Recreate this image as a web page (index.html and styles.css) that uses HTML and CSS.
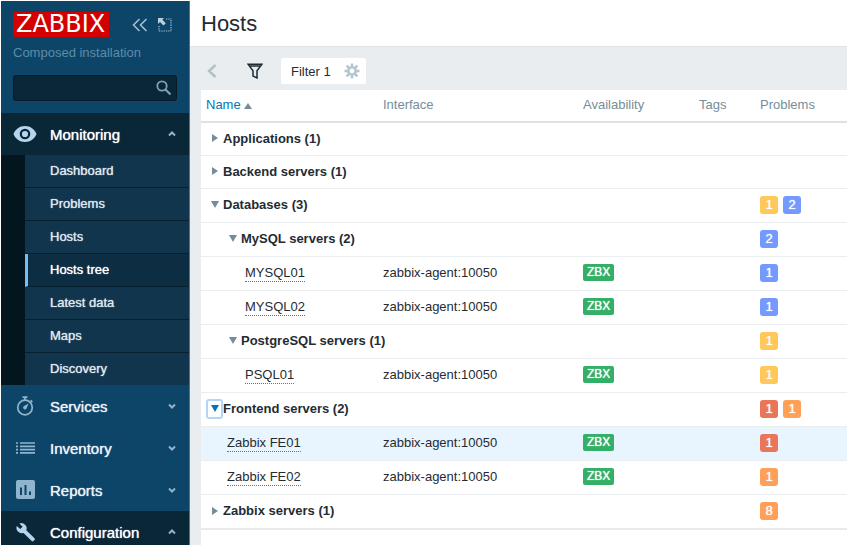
FILE: index.html
```html
<!DOCTYPE html>
<html lang="en">

	<head>
		<meta charset="utf-8" />
		<title>Hosts</title>
		<link rel="stylesheet" href="styles.css">
	</head>

	<body>
		<aside class="sidebar">
			<div class="sidebar_header">
				<a class="logo" href="#">ZABBIX</a>
				<button class="icon_btn" type="button" aria-label="Collapse sidebar">
					<svg width="16" height="14" viewBox="0 0 16 14"><path d="M7.500 1L1.500 7l6 6M14.500 1l-6 6 6 6" fill="none" stroke="#a3bfd1" stroke-width="1.600" /></svg>
				</button>
				<button class="icon_btn" type="button" aria-label="Hide sidebar">
					<svg width="14" height="14" viewBox="0 0 14 14"><path d="M0 0h6L4.300 1.700l3.500 3.500-2.300 2.300L2 4 0 6z" fill="#b9d0df" /><path d="M8 1h5.500M13 2v11M1 8v5M1 13h12" fill="none" stroke="#a3bfd1" stroke-width="1.200" stroke-dasharray="1.300 1" /></svg>
				</button>
			</div>
			<div class="server_name">Composed installation</div>
			<form class="search">
				<input type="text" aria-label="Search">
				<button type="button" aria-label="Search">
					<svg width="16" height="16" viewBox="0 0 16 16"><circle cx="6" cy="6" r="4.700" fill="none" stroke="#7ea1b8" stroke-width="1.800" /><path d="M9.500 9.500l5 5" stroke="#7ea1b8" stroke-width="2.200" /></svg>
				</button>
			</form>
			<ul class="menu">
				<li class="menu_open">
					<a class="menu_link" href="#">
						<svg class="menu_icon" width="24" height="18" viewBox="0 0 24 18"><path fill-rule="evenodd" d="M12 1C6.500 1 2.300 4.300.5 9c1.800 4.700 6 8 11.500 8s9.700-3.300 11.500-8C21.700 4.300 17.500 1 12 1zm0 13.300a5.300 5.300 0 1 1 0-10.600 5.300 5.300 0 0 1 0 10.600zM12 5.900a3.100 3.100 0 1 0 0 6.200 3.100 3.100 0 0 0 0-6.200z" fill="#b5d5ee" /></svg>
						<span>Monitoring</span>
						<svg class="chevron" width="8" height="6" viewBox="0 0 8 6"><path d="M1 4.500l3-3 3 3" /></svg>
					</a>
					<ul class="submenu">
						<li><a href="#">Dashboard</a></li>
						<li><a href="#">Problems</a></li>
						<li><a href="#">Hosts</a></li>
						<li class="selected"><a href="#">Hosts tree</a></li>
						<li><a href="#">Latest data</a></li>
						<li><a href="#">Maps</a></li>
						<li><a href="#">Discovery</a></li>
					</ul>
				</li>
				<li>
					<a class="menu_link" href="#">
						<svg class="menu_icon" width="24" height="20" viewBox="0 0 24 20"><g fill="none" stroke="#8fb4cc"><circle cx="12" cy="11.500" r="7.300" stroke-width="1.700" /><path d="M9.500 1.200h5M12 1v3M17.500 4.300l1.800 1.800" stroke-width="1.800" /></g><path d="M15.500 7.500l-2 5a1.800 1.800 0 1 1-2.800-2.200z" fill="#8fb4cc" /></svg>
						<span>Services</span>
						<svg class="chevron" width="8" height="6" viewBox="0 0 8 6"><path d="M1 1.500l3 3 3-3" /></svg>
					</a>
				</li>
				<li>
					<a class="menu_link" href="#">
						<svg class="menu_icon" width="24" height="18" viewBox="0 0 24 18"><path d="M3 4h2M3 7.300h2M3 10.600h2M3 13.900h2M7 4h15M7 7.300h15M7 10.600h15M7 13.900h15" stroke="#8fb4cc" stroke-width="1.700" /></svg>
						<span>Inventory</span>
						<svg class="chevron" width="8" height="6" viewBox="0 0 8 6"><path d="M1 1.500l3 3 3-3" /></svg>
					</a>
				</li>
				<li>
					<a class="menu_link" href="#">
						<svg class="menu_icon" width="24" height="20" viewBox="0 0 24 20"><rect x="3" y="0" width="19" height="19" rx="2" fill="#8fb4cc" /><path d="M8 7.500V15M12.500 5v10M17 11.500V15" stroke="#0d4569" stroke-width="2" /></svg>
						<span>Reports</span>
						<svg class="chevron" width="8" height="6" viewBox="0 0 8 6"><path d="M1 1.500l3 3 3-3" /></svg>
					</a>
				</li>
				<li class="menu_open">
					<a class="menu_link" href="#">
						<svg class="menu_icon" width="24" height="20" viewBox="0 0 24 20"><path d="M21.500 16.300l-8.200-8A5.300 5.300 0 0 0 6.400 1.500l3.200 3.200-2.400 2.400L3.800 4a5.300 5.300 0 0 0 6.700 6.900l8.200 8.200a1.200 1.200 0 0 0 1.600 0l1.200-1.200a1.100 1.100 0 0 0 0-1.600z" fill="#b5d5ee" /></svg>
						<span>Configuration</span>
						<svg class="chevron" width="8" height="6" viewBox="0 0 8 6"><path d="M1 4.500l3-3 3 3" /></svg>
					</a>
				</li>
			</ul>
		</aside>

		<div class="wrapper">
			<header class="page_header">
				<h1>Hosts</h1>
			</header>
			<main class="content">
				<nav class="filter_bar">
					<button class="icon_btn" type="button" aria-label="Previous tab">
						<svg width="10" height="14" viewBox="0 0 10 14"><path d="M8.500 1L2 7l6.500 6" fill="none" stroke="#b4c0c7" stroke-width="2.400" /></svg>
					</button>
					<button class="icon_btn" type="button" aria-label="Filter">
						<svg width="16" height="16" viewBox="0 0 16 16"><path d="M1 1.200h14L10 7.800V15l-4-2V7.800zM2.500 3h11" fill="none" stroke="#1f2c33" stroke-width="1.500" /></svg>
					</button>
					<div class="filter_tab">
						<a href="#">Filter 1</a>
						<button class="icon_btn" type="button" aria-label="Filter properties">
							<svg width="16" height="16" viewBox="0 0 16 16"><g fill="none" stroke="#b4c5d0"><circle cx="8" cy="8" r="3.700" stroke-width="2.600" /><path d="M8 .5v3M8 12.500v3M.5 8h3M12.500 8h3M2.700 2.700l2.100 2.100M11.200 11.200l2.100 2.100M13.300 2.700l-2.100 2.100M4.800 11.200l-2.100 2.100" stroke-width="2.400" /></g></svg>
						</button>
					</div>
				</nav>
				<table class="hosts">
					<colgroup>
						<col class="col_name">
						<col class="col_interface">
						<col class="col_availability">
						<col class="col_tags">
						<col>
					</colgroup>
					<thead>
						<tr>
							<th><a href="#">Name <span class="sort_up"></span></a></th>
							<th>Interface</th>
							<th>Availability</th>
							<th>Tags</th>
							<th>Problems</th>
						</tr>
					</thead>
					<tbody>
						<tr>
							<td colspan="4"><div class="group"><button class="toggle" type="button" aria-label="Expand"></button>Applications (1)</div></td>
							<td></td>
						</tr>
						<tr>
							<td colspan="4"><div class="group"><button class="toggle" type="button" aria-label="Expand"></button>Backend servers (1)</div></td>
							<td></td>
						</tr>
						<tr>
							<td colspan="4"><div class="group"><button class="toggle open" type="button" aria-label="Collapse"></button>Databases (3)</div></td>
							<td><div class="problems"><span class="badge warning">1</span><span class="badge info">2</span></div></td>
						</tr>
						<tr>
							<td colspan="4"><div class="group nested"><button class="toggle open" type="button" aria-label="Collapse"></button>MySQL servers (2)</div></td>
							<td><div class="problems"><span class="badge info">2</span></div></td>
						</tr>
						<tr>
							<td><div class="host nested"><a href="#">MYSQL01</a></div></td>
							<td>zabbix-agent:10050</td>
							<td><span class="zbx">ZBX</span></td>
							<td></td>
							<td><div class="problems"><span class="badge info">1</span></div></td>
						</tr>
						<tr>
							<td><div class="host nested"><a href="#">MYSQL02</a></div></td>
							<td>zabbix-agent:10050</td>
							<td><span class="zbx">ZBX</span></td>
							<td></td>
							<td><div class="problems"><span class="badge info">1</span></div></td>
						</tr>
						<tr>
							<td colspan="4"><div class="group nested"><button class="toggle open" type="button" aria-label="Collapse"></button>PostgreSQL servers (1)</div></td>
							<td><div class="problems"><span class="badge warning">1</span></div></td>
						</tr>
						<tr>
							<td><div class="host nested"><a href="#">PSQL01</a></div></td>
							<td>zabbix-agent:10050</td>
							<td><span class="zbx">ZBX</span></td>
							<td></td>
							<td><div class="problems"><span class="badge warning">1</span></div></td>
						</tr>
						<tr>
							<td colspan="4"><div class="group"><button class="toggle open focused" type="button" aria-label="Collapse"></button>Frontend servers (2)</div></td>
							<td><div class="problems"><span class="badge high">1</span><span class="badge average">1</span></div></td>
						</tr>
						<tr class="hovered">
							<td><div class="host"><a href="#">Zabbix FE01</a></div></td>
							<td>zabbix-agent:10050</td>
							<td><span class="zbx">ZBX</span></td>
							<td></td>
							<td><div class="problems"><span class="badge high">1</span></div></td>
						</tr>
						<tr>
							<td><div class="host"><a href="#">Zabbix FE02</a></div></td>
							<td>zabbix-agent:10050</td>
							<td><span class="zbx">ZBX</span></td>
							<td></td>
							<td><div class="problems"><span class="badge average">1</span></div></td>
						</tr>
						<tr>
							<td colspan="4"><div class="group"><button class="toggle" type="button" aria-label="Expand"></button>Zabbix servers (1)</div></td>
							<td><div class="problems"><span class="badge average">8</span></div></td>
						</tr>
					</tbody>
				</table>
				<div class="table_footer"></div>
			</main>
		</div>
	</body>

</html>
```

FILE: styles.css
```css
* {
	box-sizing: border-box;
	margin: 0;
	padding: 0;
}

body {
	display: flex;
	height: 100vh;
	padding: 1px 0 0 1px;
	overflow: hidden;
	background: #fff;
	color: #1f2c33;
	font-family: "Liberation Sans", Arial, sans-serif;
	font-size: 13px;
}

a {
	color: inherit;
	text-decoration: none;
}

ul {
	list-style: none;
}

button {
	border: none;
	background: none;
	cursor: pointer;
}

svg {
	display: block;
}

/* sidebar */
.sidebar {
	flex: 0 0 189px;
	min-width: 0;
	background: #0d4569;
	border-right: 1px solid #4c7690;
}

.sidebar_header {
	display: flex;
	align-items: center;
	padding: 11px 17px 0 12px;
}

.sidebar_header .icon_btn {
	margin-left: 10px;
}

.logo {
	height: 25px;
	margin-right: auto;
	padding: 0 4px 0 3px;
	background: #d40000;
	color: #fff;
	font-family: "DejaVu Sans", Verdana, sans-serif;
	font-size: 24px;
	line-height: 25px;
}

.server_name {
	padding: 8px 12px 0;
	color: #5f8ba5;
	line-height: 16px;
}

.search {
	display: flex;
	height: 26px;
	margin: 14px 12px 12px;
	padding: 0 4px;
	align-items: center;
	background: #0a2738;
	border: 1px solid #061a27;
	border-radius: 3px;
}

.search input {
	flex: 1;
	min-width: 0;
	border: none;
	outline: none;
	background: none;
	color: #fff;
}

.menu_link {
	display: flex;
	align-items: center;
	height: 42px;
	padding: 0 13px 0 12px;
	color: #eef3f6;
	font-size: 15px;
	text-shadow: 0 0 1px;
}

.menu_link span {
	flex: 1;
	margin-left: 13px;
}

.chevron {
	fill: none;
	stroke: #8fb4cc;
	stroke-width: 2;
}

.menu_open > .menu_link {
	background: #0a2738;
	color: #fff;
}

.submenu {
	border-left: 24px solid #03161f;
	background: #10354d;
}

.submenu a {
	display: block;
	padding-left: 25px;
	border-bottom: 1px solid #062030;
	color: #dfe8ee;
	line-height: 32px;
	text-shadow: 0 0 1px;
}

.submenu li:last-child a {
	border-bottom: none;
}

.submenu .selected a {
	padding-left: 22px;
	border-left: 3px solid #78bdf0;
	background: #0d2d42;
	color: #fff;
}

/* page */
.wrapper {
	display: flex;
	flex: 1;
	flex-direction: column;
	min-width: 0;
}

.page_header {
	height: 46px;
	padding: 10px 11px;
	border-bottom: 1px solid #dfe4e7;
}

h1 {
	font-size: 22px;
	font-weight: normal;
	line-height: 26px;
}

.content {
	display: flex;
	flex: 1;
	flex-direction: column;
	padding-left: 11px;
	background: #e9edf0;
}

.filter_bar {
	display: flex;
	align-items: center;
	padding: 11px 0 6px 6px;
}

.filter_bar > .icon_btn {
	margin-right: 30px;
}

.filter_bar > .icon_btn + .icon_btn {
	margin-right: 18px;
}

.filter_tab {
	display: flex;
	align-items: center;
	gap: 13px;
	height: 26px;
	padding: 0 6px 0 10px;
	border-radius: 2px;
	background: #fff;
}

/* table */
.hosts {
	width: 100%;
	table-layout: fixed;
	border-collapse: separate;
	border-spacing: 0;
	border-bottom: 2px solid #e6ebee;
	background: #fff;
}

.col_name {
	width: 177px;
}

.col_interface {
	width: 200px;
}

.col_availability {
	width: 116px;
}

.col_tags {
	width: 61px;
}

.hosts th,
.hosts td {
	height: 33px;
	padding: 0 5px 2px;
	border-bottom: 1px solid #ebeef0;
	text-align: left;
	vertical-align: middle;
	white-space: nowrap;
}

.hosts th {
	border-bottom: 2px solid #dce2e5;
	color: #768d99;
	font-weight: normal;
}

.hosts th a {
	color: #0275b8;
}

.hosts tr:last-child td {
	border-bottom: none;
}

.hovered {
	background: #e8f5ff;
}

.sort_up {
	display: inline-block;
	border: 4px solid transparent;
	border-top: none;
	border-bottom: 6px solid #768d99;
}

.group {
	display: flex;
	align-items: center;
	font-weight: bold;
}

.group.nested {
	padding-left: 18px;
}

.toggle {
	display: flex;
	align-items: center;
	justify-content: center;
	width: 17px;
	height: 20px;
	border-radius: 3px;
}

.toggle::before {
	content: "";
	border: 4px solid transparent;
	border-right: none;
	border-left: 6px solid #768d99;
}

.toggle.open::before {
	border: 4px solid transparent;
	border-top: 7px solid #768d99;
	border-bottom: none;
}

.toggle.focused {
	box-shadow: inset 0 0 0 2px #b3d6f8;
}

.toggle.open.focused::before {
	border-top-color: #0275b8;
}

.host {
	padding-left: 21px;
}

.host.nested {
	padding-left: 39px;
}

.host a {
	padding-bottom: 1px;
	border-bottom: 1px dotted #66737a;
}

.zbx {
	display: inline-block;
	padding: 0 4px;
	border-radius: 2px;
	background: #34af67;
	color: #fff;
	font-size: 12px;
	line-height: 17px;
	text-shadow: 0 0 1px;
}

.problems {
	display: flex;
	align-items: center;
	gap: 5px;
	height: 31px;
}

.badge {
	width: 18px;
	border-radius: 3px;
	color: #fff;
	line-height: 18px;
	text-align: center;
	text-shadow: 0 0 1px;
}

.info {
	background: #7499ff;
}

.warning {
	background: #ffc859;
}

.average {
	background: #ffa059;
}

.high {
	background: #e97659;
}

.table_footer {
	flex: 1;
	background: #fff;
}
```
